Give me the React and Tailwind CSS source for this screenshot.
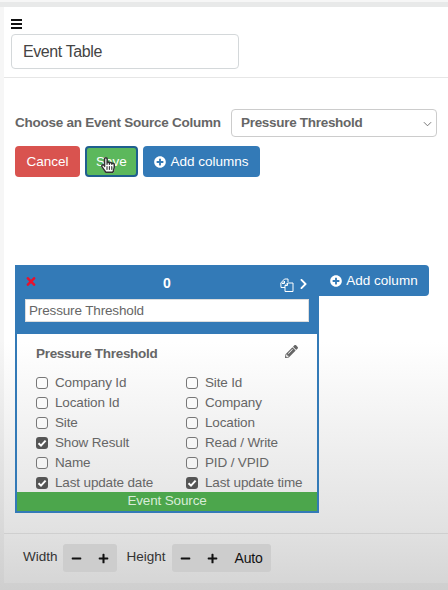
import React from "react";
import {
  FaChevronRight,
  FaHandPointer,
  FaMinus,
  FaPencilAlt,
  FaPlus,
  FaPlusCircle,
  FaRegHandPointer,
  FaTimes,
} from "react-icons/fa";

const columnas = [
  ["Company Id", false],
  ["Site Id", false],
  ["Location Id", false],
  ["Company", false],
  ["Site", false],
  ["Location", false],
  ["Show Result", true],
  ["Read / Write", false],
  ["Name", false],
  ["PID / VPID", false],
  ["Last update date", true],
  ["Last update time", true],
];

function Casilla({ label, checked }) {
  return (
    <div className="flex h-5 items-center gap-[7px] whitespace-nowrap text-[13.5px] tracking-[-0.15px] text-[#666]">
      {checked ? (
        <span className="flex h-[12px] w-[12px] items-center justify-center rounded-[3px] bg-[#555]">
          <svg viewBox="0 0 12 12" className="h-[12px] w-[12px]">
            <path d="M2.5 6.2 5 8.6 9.6 3.6" fill="none" stroke="white" strokeWidth="2" />
          </svg>
        </span>
      ) : (
        <span className="h-[12px] w-[12px] rounded-[3px] border border-[#777] bg-white/40" />
      )}
      <span>{label}</span>
    </div>
  );
}

function Duplicar() {
  return (
    <svg viewBox="0 0 14 14" className="mt-[3px] h-[14px] w-[14px]" fill="none" stroke="white" strokeWidth="1">
      <path d="M5 9.5H1L.8 5 4.5 1H8v3" />
      <path d="M4.5 3 2 5.5h2.5z" />
      <path d="M5 7.5 7.5 5H13v8.5H5z" fill="#337ab7" />
      <path d="M7.5 5v2.5H5" />
    </svg>
  );
}

export default function App() {
  return (
    <div className="flex h-[590px] w-[448px] flex-col overflow-hidden bg-[linear-gradient(to_bottom,#f6f6f6_0px,#f6f6f6_340px,#cfcfcf_590px)] pl-[4px] pt-[7px] font-['Liberation_Sans',Arial,sans-serif]">
      <div className="absolute left-0 top-[2px] h-[5px] w-[448px] bg-[#e8e9e9]" />

      <div className="flex h-[576px] flex-col bg-[linear-gradient(to_bottom,#ffffff_0px,#ffffff_335px,#e2e2e2_520px,#d6d6d6_576px)]">
        {/* Encabezado */}
        <div className="h-[71px] border-b border-[#e6e6e6] pl-[7px] pt-[12px]">
          <svg viewBox="0 0 11 10" className="h-[10px] w-[11px]" fill="#111">
            <rect width="11" height="2" />
            <rect y="4" width="11" height="2" />
            <rect y="8" width="11" height="2" />
          </svg>
          <div className="mt-[5px] flex h-[35px] w-[228px] items-center rounded-[4px] border border-[#d4d8da] pl-[11px] text-[16px] tracking-[-0.4px] text-[#444]">
            Event Table
          </div>
        </div>

        {/* Filtro */}
        <div className="flex items-center pl-[11px] pt-[31px]">
          <span className="w-[216px] whitespace-nowrap text-[13.5px] font-bold tracking-[-0.25px] text-[#666]">
            Choose an Event Source Column
          </span>
          <div className="flex h-[28px] w-[206px] items-center justify-between rounded-[4px] border border-[#ccc] pl-[9px] pr-[4px] pt-[1px] text-[13.5px] font-bold tracking-[-0.3px] text-[#666]">
            Pressure Threshold
            <svg viewBox="0 0 10 6" className="h-[6px] w-[9px]" fill="none" stroke="#666" strokeWidth="1">
              <path d="M1 1l4 4 4-4" />
            </svg>
          </div>
        </div>

        {/* Botones */}
        <div className="flex gap-[5px] pl-[11px] pt-[9px] text-[13.5px] text-white">
          <button className="h-[31px] w-[65px] rounded-[4px] bg-[#d9534f] pt-[1px]">Cancel</button>
          <button className="relative h-[31px] w-[53px] rounded-[4px] border-2 border-[#1f5f8f] bg-[#5cb85c] pt-[1px]">
            Save
            <span className="absolute left-[14px] top-[9px]">
              <FaHandPointer className="absolute h-[16px] w-[14px] text-white" />
              <FaRegHandPointer className="absolute h-[16px] w-[14px] text-[#333]" />
            </span>
          </button>
          <button className="flex h-[31px] w-[117px] items-center justify-center gap-[4px] rounded-[4px] bg-[#337ab7] pt-[1px]">
            <FaPlusCircle className="h-[12px] w-[12px]" />
            Add columns
          </button>
        </div>

        {/* Columna */}
        <div className="flex pl-[11px] pt-[88px]">
          <div className="w-[304px] border-2 border-t-0 border-[#337ab7]">
            <div className="-mx-[2px] bg-[#337ab7] px-[10px] pb-[12px] pt-[10px]">
              <div className="grid h-[24px] grid-cols-[1fr_auto_1fr] items-start">
                <FaTimes className="h-[13px] w-[12px] text-[#e8112d]" />
                <span className="text-[14px] font-bold leading-[16px] text-white">0</span>
                <div className="flex items-start justify-end gap-[5px] pr-[1px]">
                  <Duplicar />
                  <FaChevronRight className="mt-[3px] h-[12px] w-[9px] text-white" />
                </div>
              </div>
              <div className="flex h-[23px] items-center border border-[#ddd] bg-white pl-[3px] pt-[1px] text-[13.5px] tracking-[-0.15px] text-[#666]">
                Pressure Threshold
              </div>
            </div>
            <div className="h-[158px] pl-[19px] pr-[19px] pt-[10px]">
              <div className="flex items-center justify-between">
                <span className="text-[13.5px] font-bold tracking-[-0.3px] text-[#666]">Pressure Threshold</span>
                <FaPencilAlt className="mb-[5px] h-[13px] w-[13px] text-[#666]" />
              </div>
              <div className="mt-[9px] grid grid-cols-[150px_1fr]">
                {columnas.map(([label, checked]) => (
                  <Casilla key={label} label={label} checked={checked} />
                ))}
              </div>
            </div>
            <div className="flex h-[19px] items-center justify-center bg-[#4ca64c] text-[13.5px] tracking-[-0.15px] text-[#d8ecd8]">
              Event Source
            </div>
          </div>
          <button className="flex h-[31px] w-[110px] items-center justify-center gap-[4px] rounded-r-[4px] bg-[#337ab7] pt-[1px] text-[13.5px] text-white">
            <FaPlusCircle className="h-[12px] w-[12px]" />
            Add column
          </button>
        </div>

        {/* Barra inferior */}
        <div className="mt-[20px] flex items-start border-t border-[#cfcfcf] pl-[19px] pt-[10px] text-[13.5px] text-[#333]">
          <span className="pt-[3px]">Width</span>
          <div className="ml-[5px] flex h-[28px] w-[54px] items-center justify-between rounded-[3px] bg-[#cdcdcd] px-[8px] text-[#111]">
            <FaMinus className="h-[11px] w-[11px]" />
            <FaPlus className="h-[11px] w-[11px]" />
          </div>
          <span className="ml-[10px] pt-[3px]">Height</span>
          <div className="ml-[6px] flex h-[28px] w-[99px] items-center rounded-[3px] bg-[#cdcdcd] pl-[8px] text-[#111]">
            <FaMinus className="h-[11px] w-[11px]" />
            <FaPlus className="ml-[16px] h-[11px] w-[11px]" />
            <span className="ml-[17px] pt-[1px] text-[14px] tracking-[-0.2px]">Auto</span>
          </div>
        </div>
      </div>
    </div>
  );
}
